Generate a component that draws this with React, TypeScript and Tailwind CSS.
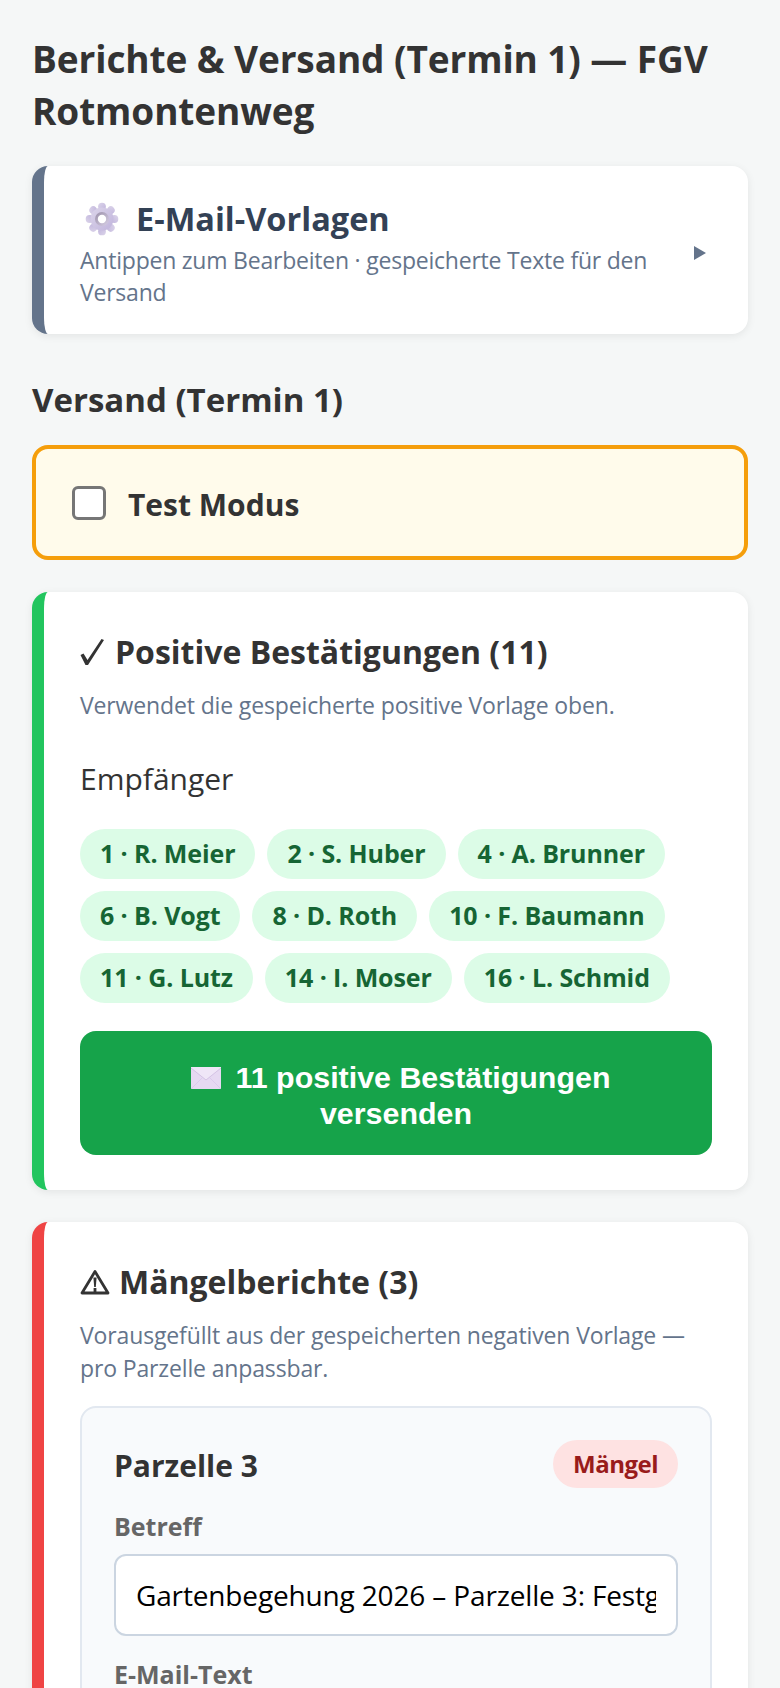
const RECIPIENTS = [
  ['1 · R. Meier', '2 · S. Huber', '4 · A. Brunner'],
  ['6 · B. Vogt', '8 · D. Roth', '10 · F. Baumann'],
  ['11 · G. Lutz', '14 · I. Moser', '16 · L. Schmid'],
];

function GearIcon() {
  return (
    <svg viewBox="0 0 34 34" className="h-[34px] w-[34px] shrink-0">
      <defs>
        <linearGradient id="gear" x1="0" y1="0" x2="1" y2="1">
          <stop offset="0" stopColor="#dcd5ea" />
          <stop offset="1" stopColor="#c0b4dc" />
        </linearGradient>
        <linearGradient id="gearRing" x1="0" y1="0" x2="1" y2="1">
          <stop offset="0" stopColor="#9a8fa8" />
          <stop offset="1" stopColor="#d8d0e6" />
        </linearGradient>
      </defs>
      <g fill="url(#gear)">
        {[0, 45, 90, 135, 180, 225, 270, 315].map((a) => (
          <circle key={a} cx="17" cy="4.6" r="3.9" transform={`rotate(${a} 17 17)`} />
        ))}
        <circle cx="17" cy="17" r="11.5" />
      </g>
      <circle cx="17" cy="17" r="7" fill="url(#gearRing)" />
      <circle cx="17" cy="17" r="4.2" fill="#ffffff" />
    </svg>
  );
}

function MailIcon() {
  return (
    <svg viewBox="0 0 30 22" className="mr-[15px] ml-[9px] inline-block h-[22px] w-[30px] align-[-1px]">
      <rect x="0" y="0" width="30" height="22" rx="1.5" fill="#e6d9f2" />
      <path d="M0 1 L15 13 L30 1 V0 H0 Z" fill="#efe6f7" />
      <path d="M0 1 L15 13 L30 1" fill="none" stroke="#cdbbe0" strokeWidth="0.8" />
      <path d="M0 22 L12 10 M30 22 L18 10" stroke="#d8c8ea" strokeWidth="0.8" />
    </svg>
  );
}

function CheckIcon() {
  return (
    <svg viewBox="0 0 24 26" className="mr-[11px] h-[26px] w-[24px] shrink-0">
      <path d="M0.5 16 L3.5 14.5 L7.5 21 L21.5 0 L24 1 L8 26 H5.5 Z" fill="#333333" />
    </svg>
  );
}

function WarningIcon() {
  return (
    <svg viewBox="0 0 30 26" className="mr-[9px] h-[26px] w-[30px] shrink-0">
      <path d="M15 2.5 L28 24 H2 Z" fill="none" stroke="#333333" strokeWidth="2.8" strokeLinejoin="round" />
      <path d="M13.4 8.5 H16.6 L15.8 18 H14.2 Z" fill="#333333" />
      <rect x="13.6" y="19" width="2.8" height="4" fill="#333333" />
    </svg>
  );
}

export default function App() {
  return (
    <div className="h-[1688px] overflow-hidden bg-[#f5f7f7] px-8 pt-[33px] font-['Open_Sans',sans-serif] text-[#333333]">
      <h1 className="text-[37px] leading-[52px] font-bold tracking-[-0.1px]">
        Berichte &amp; Versand (Termin 1) — FGV Rotmontenweg
      </h1>

      <div className="mt-[29px] flex h-[168px] items-center rounded-2xl border-l-[12px] border-[#64748b] bg-white pt-[5px] pr-[42px] pl-[36px] shadow-[0_2px_8px_rgba(0,0,0,0.08)]">
        <div className="min-w-0 flex-1">
          <div className="flex items-center pl-[5px] text-[32.5px] leading-[42px] font-bold text-[#334155]">
            <GearIcon />
            <span className="ml-[17px]">E-Mail-Vorlagen</span>
          </div>
          <p className="mt-[4px] text-[23px] leading-[32px] tracking-[-0.22px] text-[#64748b]">
            Antippen zum Bearbeiten · gespeicherte Texte für den Versand
          </p>
        </div>
        <span className="ml-[34px] h-0 w-0 border-y-[7px] border-l-[12px] border-y-transparent border-l-[#64748b]" />
      </div>

      <h2 className="mt-[44px] text-[33px] leading-[44px] font-bold">Versand (Termin 1)</h2>

      <div className="mt-[23px] flex h-[115px] items-center rounded-2xl border-[4px] border-[#f59e0b] bg-[#fffbeb] pl-[36px]">
        <span className="h-[34px] w-[34px] rounded-[6px] border-[3px] border-[#767676] bg-white" />
        <span className="ml-[22px] pt-[3px] text-[30px] font-bold">Test Modus</span>
      </div>

      <section className="mt-[32px] h-[598px] rounded-2xl border-l-[12px] border-[#22c55e] bg-white px-[36px] pt-[38px] shadow-[0_2px_8px_rgba(0,0,0,0.08)]">
        <h3 className="flex items-center text-[32px] leading-[44px] font-bold">
          <CheckIcon />
          Positive Bestätigungen (11)
        </h3>
        <p className="mt-[15px] text-[23px] leading-[32px] tracking-[-0.14px] text-[#64748b]">
          Verwendet die gespeicherte positive Vorlage oben.
        </p>
        <div className="mt-[38px] text-[30px] leading-[40px]">Empfänger</div>
        <div className="mt-[30px] flex flex-col gap-[12px]">
          {RECIPIENTS.map((row) => (
            <div key={row[0]} className="flex gap-[12px]">
              {row.map((name) => (
                <span
                  key={name}
                  className="flex h-[50px] items-center rounded-full bg-[#dcfce7] px-[20px] text-[25px] font-bold tracking-[-0.1px] text-[#166534]"
                >
                  {name}
                </span>
              ))}
            </div>
          ))}
        </div>
        <button className="mt-[28px] flex h-[124px] w-full items-center justify-center rounded-2xl bg-[#16a34a] px-[36px] pt-[4px] text-center font-['Liberation_Sans',sans-serif] text-[30.4px] leading-[36px] font-bold text-white">
          <span>
            <MailIcon />
            11 positive Bestätigungen
            <br />
            versenden
          </span>
        </button>
      </section>

      <section className="mt-[32px] h-[600px] rounded-2xl border-l-[12px] border-[#ef4444] bg-white px-[36px] pt-[38px] shadow-[0_2px_8px_rgba(0,0,0,0.08)]">
        <h3 className="flex items-center text-[32px] leading-[44px] font-bold">
          <WarningIcon />
          Mängelberichte (3)
        </h3>
        <p className="mt-[15px] text-[23px] leading-[33px] tracking-[-0.14px] text-[#64748b]">
          Vorausgefüllt aus der gespeicherten negativen Vorlage — pro Parzelle anpassbar.
        </p>
        <div className="mt-[21px] h-[400px] rounded-2xl border-[2.5px] border-[#e2e8f0] bg-[#f8fafc] px-[32px] pt-[32px]">
          <div className="flex items-center justify-between">
            <h4 className="pt-[2px] text-[30px] font-bold">Parzelle 3</h4>
            <span className="flex h-[48px] items-center rounded-full bg-[#fee2e2] px-[20px] text-[24px] font-bold tracking-[-0.5px] text-[#991b1b]">
              Mängel
            </span>
          </div>
          <div className="mt-[22px] text-[25px] leading-[32px] font-bold text-[#666666]">Betreff</div>
          <input
            readOnly
            value="Gartenbegehung 2026 – Parzelle 3: Festgestellte Mängel"
            className="mt-[12px] h-[82px] w-full rounded-xl border-[2.5px] border-[#cbd5e1] bg-white px-[20px] text-[28px] tracking-[-0.15px] text-black"
          />
          <div className="mt-[22px] text-[25px] leading-[32px] font-bold text-[#666666]">E-Mail-Text</div>
        </div>
      </section>
    </div>
  );
}
